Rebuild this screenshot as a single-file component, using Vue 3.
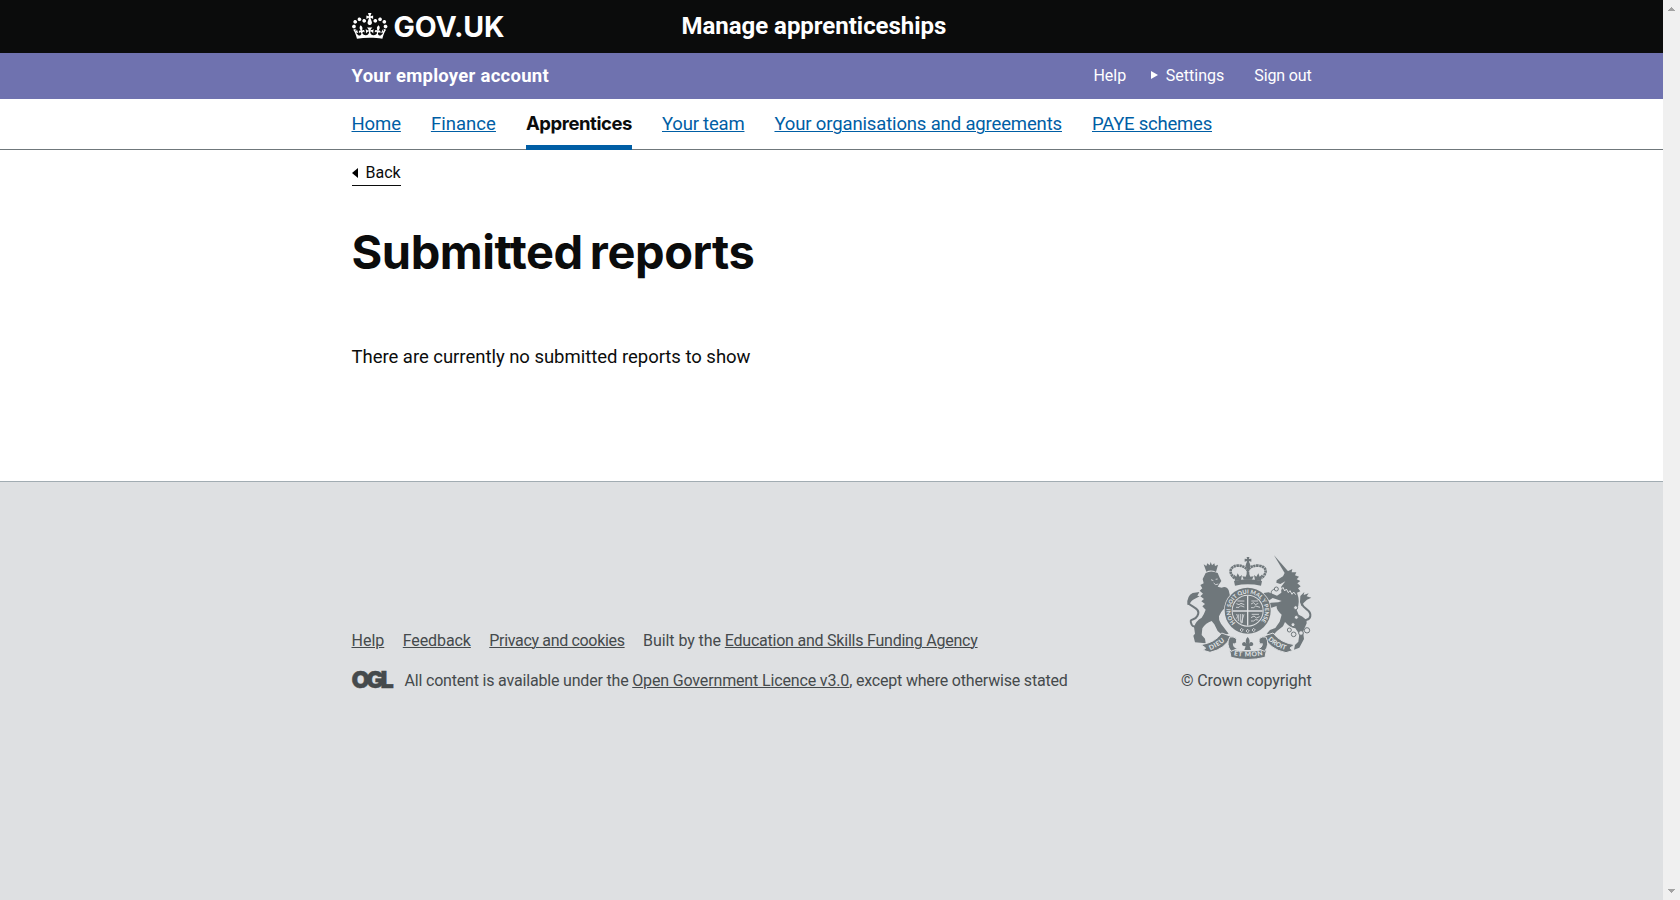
<script setup>
const crown = 'M25 30.2c3.5 1.5 7.7-.2 9.1-3.7 1.5-3.6-.2-7.8-3.9-9.2-3.6-1.4-7.6.3-9.1 3.9-1.4 3.5.3 7.5 3.9 9zM9 39.5c3.6 1.5 7.8-.2 9.2-3.7 1.5-3.6-.2-7.8-3.9-9.1-3.6-1.5-7.6.2-9.1 3.8-1.4 3.5.3 7.5 3.8 9zM4.4 57.2c3.5 1.5 7.7-.2 9.1-3.8 1.5-3.6-.2-7.7-3.9-9.1-3.5-1.5-7.6.3-9.1 3.8-1.4 3.5.3 7.6 3.9 9.1zm38.3-21.4c3.5 1.5 7.7-.2 9.1-3.8 1.5-3.6-.2-7.7-3.9-9.1-3.6-1.5-7.6.3-9.1 3.8-1.3 3.6.4 7.7 3.9 9.1zm64.4-5.6c-3.6 1.5-7.8-.2-9.1-3.7-1.5-3.6.2-7.8 3.8-9.2 3.6-1.4 7.7.3 9.2 3.9 1.3 3.5-.4 7.5-3.9 9zm15.9 9.3c-3.6 1.5-7.7-.2-9.1-3.7-1.5-3.6.2-7.8 3.7-9.1 3.6-1.5 7.7.2 9.2 3.8 1.5 3.5-.3 7.5-3.8 9zm4.7 17.7c-3.6 1.5-7.8-.2-9.2-3.8-1.5-3.6.2-7.7 3.9-9.1 3.6-1.5 7.7.3 9.2 3.8 1.3 3.5-.4 7.6-3.9 9.1zM89.3 35.8c-3.6 1.5-7.8-.2-9.2-3.8-1.4-3.6.2-7.7 3.9-9.1 3.6-1.5 7.7.3 9.2 3.8 1.4 3.6-.3 7.7-3.9 9.1zM69.7 17.7l8.9 4.7V9.3l-8.9 2.8c-.2-.3-.5-.6-.9-.9L72.4 0H59.6l3.5 11.2c-.3.3-.6.5-.9.9l-8.8-2.8v13.1l8.8-4.7c.3.3.6.7.9.9l-5 15.4v.1c-.2.8-.4 1.6-.4 2.4 0 4.1 3.1 7.5 7 8.1h.2c.3 0 .7.1 1 .1.4 0 .7 0 1-.1h.2c4-.6 7.1-4.1 7.1-8.1 0-.8-.1-1.7-.4-2.4V34l-5.1-15.4c.4-.2.7-.6 1-.9zM66 92.8c16.9 0 32.8 1.1 47.1 3.2 4-16.9 8.9-26.7 14-33.5l-9.6-3.4c1 4.9 1.1 7.2 0 10.2-1.5-1.4-3-4.3-4.2-8.7L108.6 76c2.8-2 5-3.2 7.5-3.3-4.4 9.4-10 11.9-13.6 11.2-4.3-.8-6.3-4.6-5.6-7.9 1-4.7 5.7-5.9 8-.5 4.3-8.7-3-11.4-7.6-8.8 7.1-7.2 7.9-13.5 2.1-21.1-8 6.1-8.1 12.3-4.5 20.8-4.7-5.4-12.1-2.5-9.5 6.2 3.4-5.2 7.9-2 7.2 3.1-.6 4.3-6.4 7.8-13.5 7.2-10.3-.9-10.9-8-11.2-13.8 2.5-.5 7.1 1.8 11 7.3L80.2 60c-4.1 4.4-8 5.3-12.3 5.4 1.4-4.4 8-11.6 8-11.6H55.5s6.4 7.2 7.9 11.6c-4.2-.1-8-1-12.3-5.4l1.4 16.4c3.9-5.5 8.5-7.7 10.9-7.3-.3 5.8-.9 12.8-11.1 13.8-7.2.6-12.9-2.9-13.5-7.2-.7-5 3.8-8.3 7.1-3.1 2.7-8.7-4.6-11.6-9.4-6.2 3.7-8.5 3.6-14.7-4.6-20.8-5.8 7.6-5 13.9 2.2 21.1-4.7-2.6-11.9.1-7.7 8.8 2.3-5.5 7.1-4.2 8.1.5.7 3.3-1.3 7.1-5.7 7.9-3.5.7-9-1.8-13.5-11.2 2.5.1 4.7 1.3 7.5 3.3l-4.7-15.4c-1.2 4.4-2.7 7.2-4.3 8.7-1.1-3-.9-5.3 0-10.2l-9.5 3.4c5 6.9 9.9 16.7 14 33.5 14.8-2.1 30.8-3.2 47.7-3.2z'
const nav = [
  { t: 'Home', c: 'n-home' },
  { t: 'Finance', c: 'n-fin' },
  { t: 'Apprentices', c: 'active' },
  { t: 'Your team', c: 'n-team' },
  { t: 'Your organisations and agreements', c: 'n-org' },
  { t: 'PAYE schemes', c: 'n-paye' }
]
</script>

<template>
  <div class="window">
    <div class="page">
      <header class="top">
        <div class="wrap top-row">
          <a class="logo">
            <svg class="crown" viewBox="0 0 132 97"><path :d="crown" /></svg>
            <span class="govuk">GOV.UK</span>
          </a>
          <a class="service">Manage apprenticeships</a>
        </div>
      </header>

      <div class="account">
        <div class="wrap account-row">
          <strong class="account-name">Your employer account</strong>
          <nav class="user-nav">
            <a class="u-help">Help</a>
            <a class="u-settings">
              <svg class="tri" viewBox="0 0 7 8"><path d="M0 0L7 4L0 8Z" /></svg>
              <span>Settings</span>
            </a>
            <a class="u-out">Sign out</a>
          </nav>
        </div>
      </div>

      <nav class="main-nav">
        <div class="wrap main-nav-row">
          <a v-for="n in nav" :key="n.t" :class="['nav-item', n.c]">{{ n.t }}</a>
        </div>
      </nav>

      <main class="wrap main">
        <a class="back">
          <svg class="back-tri" viewBox="0 0 6 10"><path d="M6 0V10L0 5Z" /></svg>
          <span>Back</span>
        </a>
        <h1>Submitted reports</h1>
        <p class="body-text">There are currently no submitted reports to show</p>
      </main>

      <footer class="footer">
        <div class="wrap footer-row">
          <div class="meta">
            <div class="links">
              <a class="f-help">Help</a>
              <a class="f-feed">Feedback</a>
              <a class="f-priv">Privacy and cookies</a>
              <span class="f-built">Built by the <a class="f-agency">Education and Skills Funding Agency</a></span>
            </div>
            <div class="licence">
              <span class="ogl">OGL</span>
              <span class="lic-text">All content is available under the <a class="f-ogl">Open Government Licence v3.0</a>, except where otherwise stated</span>
            </div>
          </div>

          <div class="copyright">
            <svg class="arms" viewBox="0 0 384 324">
              <defs>
                <path id="garter-arc" d="M151.500 209.500A51.500 51.500 0 1 1 224.500 209.500" />
                <path id="dieu-arc" d="M72 293Q102 282 128 257" />
                <path id="mon-arc" d="M142 306Q189 316 238 305" />
                <path id="droit-arc" d="M246 258Q270 283 308 293" />
              </defs>
              <!-- imperial crown -->
              <g class="solid">
                <path d="M185 12h8l-1 6 7-1v9l-7-2 2 9h-10l2-9-7 2v-9l7 1z" />
                <circle cx="189" cy="37" r="7" />
                <path d="M147 84Q188 74 231 84L228 98Q188 90 150 98Z" />
                <path d="M150 84l-4-20 8 7 4-10 6 10 7-5-3 16zM228 84l4-20-8 7-4-10-6 10-7-5 3 16zM176 80l-4-10 10 1 7-16 7 16 10-1-5 10z" />
              </g>
              <g class="dots">
                <path d="M149 76C128 58 136 39 158 38Q178 37 188 52Q198 37 220 38C244 39 250 58 229 76" />
                <path d="M189 40V66" />
              </g>
              <!-- lion -->
              <g class="solid">
                <path d="M56 34l8 5 3-8 7 6 3-10 4 10 7-6 2 8 9-4-6 22Q78 49 64 56Z" />
                <path d="M62 60Q78 51 98 60L104 74L109 84L103 93L98 101L110 104Q124 98 131 112L135 128L132 150L143 160L136 168L143 186L130 184L116 168Q106 178 102 190Q100 200 108 212L124 233L131 242L112 246L98 234L88 214L80 204Q62 210 52 226L50 246L60 257L62 271L30 268L25 248L30 242L27 222Q32 204 50 194Q58 182 62 170L52 160L60 153L49 145L57 138L46 130L54 122L44 113L52 106L46 96L56 91L53 78Z" />
                <path d="M7 155Q5 129 23 120L43 117L37 128L44 130L30 137Q18 141 13 156Z" />
              </g>
              <path class="tail" d="M11 151C20 162 50 167 37 189C28 207 10 191 20 215Q24 224 38 218" />
              <path class="light-line" d="M78 80l7 3M92 79l6-1M86 90l6 5 8-2" />
              <!-- unicorn -->
              <g class="solid">
                <path d="M267 7L312 58L302 65Z" />
                <path d="M308 55L322 48L320 58L334 58L330 67L342 71L335 79L346 84L337 91L347 100L339 106L346 115L336 119L340 133Q344 155 335 171L341 185Q366 195 365 211L354 236L357 258L343 284L327 290L330 276L340 266L343 244L331 226Q315 224 300 207L294 220L276 234L265 245L245 242L255 231L271 225L284 206L290 185Q273 171 275 159L255 166L249 178L237 167L243 154L258 149L280 148L290 144L263 135L248 145L233 136L236 120L251 118L276 128L289 119L288 102L301 85L286 93L274 89L275 82L294 70L299 60Z" />
                <path d="M346 129L358 117L356 126L371 121L365 130L379 134L366 140Q356 147 350 160L345 148Z" />
              </g>
              <path class="tail" d="M350 152C358 172 379 169 376 189C373 207 357 194 356 211" />
              <path class="collar" d="M286 98l3 11 5-6 5 11 5-6 6 11 5-6 6 11 5-7 6 8" />
              <g class="chain">
                <path d="M272 107C254 111 255 125 270 129M326 147Q346 158 330 172M331 183Q345 196 327 207" />
                <circle cx="274" cy="108" r="6" /><circle cx="332" cy="164" r="6" />
                <circle cx="334" cy="193" r="6" /><circle cx="324" cy="215" r="6" />
                <circle cx="313" cy="231" r="6" /><circle cx="326" cy="244" r="7" />
                <circle cx="348" cy="240" r="7" /><circle cx="366" cy="232" r="8" />
              </g>
              <!-- shield and garter -->
              <circle class="halo" cx="188" cy="173" r="71" />
              <circle class="solid" cx="188" cy="173" r="69" />
              <circle class="ground" cx="188" cy="173" r="48" />
              <circle class="solid" cx="188" cy="173" r="45" />
              <path class="light-thick" d="M188 128V218M143 174H233" />
              <path class="light-line" d="M157 144h21M154 152l8 3 6-4 10 4M153 163h9l5-5 11 4M199 144h20M198 153l8-4 5 6 9-4M198 164h8l6-5 13 4M160 184v20M166 183v25M172 183v27M155 183q5 8 0 14M177 184l-9 28M200 184h22M198 194l9-5 7 6 10-4M198 204h8l5-4 9 1" />
              <text class="arms-text garter"><textPath href="#garter-arc" textLength="236">HONI SOIT QUI MAL Y PENSE</textPath></text>
              <path class="light-line" d="M170 226l5 5-5 5-5-5zM188 229l5 5-5 5-5-5zM206 226l5 5-5 5-5-5z" />
              <!-- ribbon -->
              <g class="ribbon">
                <path d="M48 275Q91 269 110 240L138 250Q121 288 75 298L55 292L62 285Z" />
                <path d="M329 275Q287 270 264 240L237 249Q253 289 303 299L322 293L315 285Z" />
                <path d="M133 287Q188 302 245 287L240 313Q188 326 138 313Z" />
                <path d="M134 252q23-3 21 15q-4 10-10 5q0 14 15 14l-22 9q-16-21-4-43z" />
                <path d="M243 252q-23-3-21 15q4 10 10 5q0 14-15 14l22 9q16-21 4-43z" />
              </g>
              <path class="solid" d="M188 252q9 9 4 21q4-10 12-3q3 8-5 9l-5 1 4 11h-20l4-11-5-1q-8-1-5-9q8-7 12 3q-5-12 4-21z" />
              <text class="arms-text"><textPath href="#dieu-arc" startOffset="4" textLength="52">DIEU</textPath></text>
              <text class="arms-text"><textPath href="#mon-arc" startOffset="4" textLength="88">ET MON</textPath></text>
              <text class="arms-text"><textPath href="#droit-arc" startOffset="3" textLength="62">DROIT</textPath></text>
            </svg>
            <a class="crown-text">© Crown copyright</a>
          </div>
        </div>
      </footer>
    </div>

    <aside class="scrollbar">
      <svg class="arrow" viewBox="0 0 7 4"><path d="M3 0h1v1h1v1h1v1h1v1H0V3h1V2h1V1h1z" /></svg>
      <svg class="arrow" viewBox="0 0 7 4"><path d="M0 0h7v1H6v1H5v1H4v1H3V3H2V2H1V1H0z" /></svg>
    </aside>
  </div>
</template>

<style>
body { margin: 0; overflow: hidden; }
</style>

<style scoped>
* { box-sizing: border-box; }
.window { display: grid; grid-template-columns: 1fr 17px; height: 900px; font-family: Roboto, "Noto Sans", sans-serif; color: #0b0c0c; }
.page { display: flex; flex-direction: column; background: #fff; min-width: 0; }
.wrap { width: 960px; margin: 0 auto; }
a { white-space: nowrap; }

.top { background: #0b0c0c; color: #fff; height: 53px; }
.top-row { display: flex; }
.logo { display: flex; align-items: center; width: 330px; height: 53px; padding-left: 0.5px; }
.crown { width: 35.5px; height: 26px; fill: #fff; margin-top: -2px; }
.govuk { font: 700 28.5px/53px Inter, sans-serif; letter-spacing: -0.1px; margin-left: 6px; }
.service { font-size: 24px; font-weight: 700; line-height: 52px; letter-spacing: -0.03px; }

.account { background: #6f72af; color: #fff; height: 46px; }
.account-row { display: flex; justify-content: space-between; line-height: 46px; }
.account-name { font-size: 18.5px; letter-spacing: 0.27px; }
.user-nav { display: flex; font-size: 16px; }
.u-help { margin-right: 24.5px; }
.u-settings { display: flex; align-items: center; margin-right: 30px; letter-spacing: 0.02px; }
.u-out { letter-spacing: -0.15px; }
.tri { width: 7px; height: 8px; fill: #fff; margin: -2px 8px 0 0; }

.main-nav { height: 51px; box-shadow: inset 0 -1px #6f777b; }
.main-nav-row { display: flex; gap: 30px; }
.nav-item { height: 51px; font-size: 18.5px; line-height: 50px; color: #005ea5; text-decoration: underline; text-decoration-thickness: 1px; text-underline-offset: 1px; }
.n-home { letter-spacing: -0.1px; }
.n-fin { letter-spacing: 0.05px; }
.n-team { letter-spacing: -0.2px; }
.n-org { letter-spacing: -0.146px; }
.n-paye { letter-spacing: -0.22px; }
.active { font-family: Inter, sans-serif; font-weight: 700; letter-spacing: -0.437px; color: #0b0c0c; text-decoration: none; border-bottom: 5px solid #005ea5; line-height: 49px; }

.main { display: flex; flex-direction: column; align-items: flex-start; }
.back { display: flex; align-items: center; margin-top: 13px; height: 23px; padding-bottom: 2px; border-bottom: 1px solid #0b0c0c; font-size: 16px; line-height: 20px; }
.back-tri { width: 6px; height: 10px; margin-right: 8px; }
h1 { margin: 41px 0 0; font: 700 47px/49px Inter, sans-serif; letter-spacing: -0.45px; word-spacing: -3.5px; white-space: nowrap; }
.body-text { margin: 69px 0 111px; font-size: 18.5px; line-height: 25px; letter-spacing: -0.03px; }

.footer { flex: 1; background: #dee0e2; border-top: 1px solid #a1acb2; color: #454a4c; font-size: 16px; line-height: 20px; }
.footer-row { display: flex; justify-content: space-between; align-items: flex-end; padding-top: 71px; }
.meta { display: flex; flex-direction: column; gap: 20px; }
.links { display: flex; white-space: nowrap; }
.links a, .f-ogl { text-decoration: underline; text-decoration-thickness: 1px; text-underline-offset: 1px; }
.f-help { margin-right: 18.5px; }
.f-feed { letter-spacing: -0.105px; margin-right: 18.5px; }
.f-priv { letter-spacing: -0.33px; margin-right: 18.5px; }
.f-built { letter-spacing: -0.08px; }
.links .f-agency { letter-spacing: -0.225px; }
.licence { display: flex; white-space: nowrap; }
.ogl { width: 53px; font: 900 23.5px/17px Inter, sans-serif; letter-spacing: -3.5px; -webkit-text-stroke: 0.4px #454a4c; }
.lic-text { letter-spacing: -0.185px; }
.f-ogl { letter-spacing: -0.15px; }
.copyright { display: flex; flex-direction: column; align-items: flex-end; }
.arms { width: 128px; height: 108px; margin: 0 -1.5px 10px 0; }
.crown-text { letter-spacing: -0.117px; }

.solid, .ribbon { fill: #6f777b; }
.ribbon { stroke: #dee0e2; stroke-width: 3; }
.ground, .halo { fill: #dee0e2; }
.dots { fill: none; stroke: #6f777b; stroke-width: 8; stroke-dasharray: 7 1.5; }
.tail { fill: none; stroke: #6f777b; stroke-width: 6; }
.light-line { fill: none; stroke: #dee0e2; stroke-width: 2.5; }
.light-thick { fill: none; stroke: #dee0e2; stroke-width: 4; }
.collar { fill: none; stroke: #dee0e2; stroke-width: 3; }
.chain { fill: none; stroke: #6f777b; stroke-width: 3; }
.chain circle { fill: #dee0e2; }
.arms-text { fill: #dee0e2; font: 900 20px Lato, sans-serif; }
.garter { font-size: 17px; }

.scrollbar { background: #f0f0f0; display: flex; flex-direction: column; justify-content: space-between; align-items: center; padding: 7px 0; }
.arrow { width: 7px; height: 4px; fill: #a3a3a3; }
</style>
